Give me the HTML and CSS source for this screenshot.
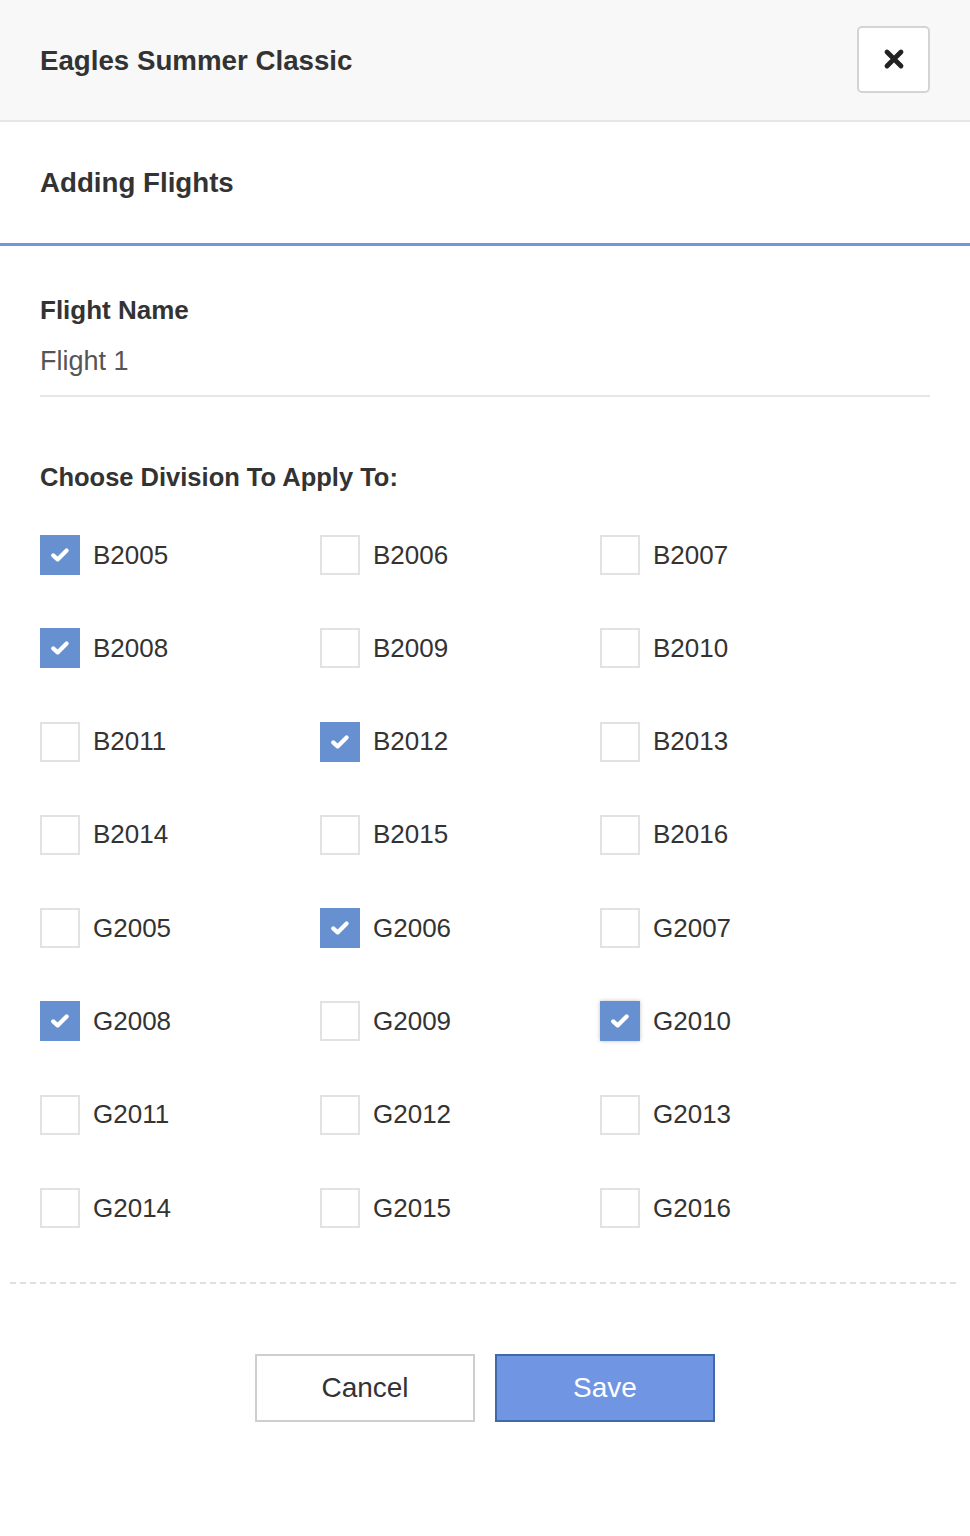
FILE: index.html
```html
<!DOCTYPE html>
<html lang="en">
  <head>
    <meta charset="UTF-8" />
    <meta name="viewport" content="width=device-width, initial-scale=1.0" />
    <title>Adding Flights</title>
    <link rel="stylesheet" href="styles.css">
  </head>
  <body>
    <div class="modal">
      <div class="modal-header">
        <h1>Eagles Summer Classic</h1>
        <button class="close-btn" type="button" aria-label="Close">
          <svg width="22" height="22" viewBox="0 0 22 22">
            <path d="M4 4 L18 18 M18 4 L4 18" stroke="#222" stroke-width="4.8" stroke-linecap="round" />
          </svg>
        </button>
      </div>

      <div class="sub-header">
        <h2>Adding Flights</h2>
      </div>

      <form class="flight-form">
        <div class="field">
          <label for="flight-name">Flight Name</label>
          <input type="text" id="flight-name" value="Flight 1" />
        </div>

        <h3>Choose Division To Apply To:</h3>
        <div class="division-grid" id="division-grid"></div>

        <div class="divider"></div>

        <div class="actions">
          <button type="button" class="btn btn-cancel">Cancel</button>
          <button type="submit" class="btn btn-save">Save</button>
        </div>
      </form>
    </div>

    <script>
      document.addEventListener("DOMContentLoaded", function () {
        const grid = document.getElementById("division-grid");
        const divisions = [
          "B2005", "B2006", "B2007", "B2008", "B2009", "B2010",
          "B2011", "B2012", "B2013", "B2014", "B2015", "B2016",
          "G2005", "G2006", "G2007", "G2008", "G2009", "G2010",
          "G2011", "G2012", "G2013", "G2014", "G2015", "G2016"
        ];
        const checked = ["B2005", "B2008", "B2012", "G2006", "G2008", "G2010"];
        const focused = "G2010";

        divisions.forEach(function (name) {
          const item = document.createElement("label");
          item.className = "division";

          const box = document.createElement("span");
          box.className = "checkbox";
          if (checked.includes(name)) box.classList.add("checked");
          if (name === focused) box.classList.add("focused");
          box.innerHTML =
            '<svg width="20" height="16" viewBox="0 0 20 16"><path d="M3.2 8.4 L7.6 12.4 L16.6 3.4" fill="none" stroke="#fff" stroke-width="4.2" stroke-linecap="round" stroke-linejoin="round"/></svg>';

          const text = document.createElement("span");
          text.textContent = name;

          item.appendChild(box);
          item.appendChild(text);
          item.addEventListener("click", function () {
            box.classList.toggle("checked");
          });
          grid.appendChild(item);
        });
      });
    </script>
  </body>
</html>
```

FILE: styles.css
```css
* {
  margin: 0;
  padding: 0;
  box-sizing: border-box;
}

body {
  font-family: "Liberation Sans", Arial, sans-serif;
  color: #333;
  background-color: #fff;
}

.modal {
  width: 970px;
}

.modal-header {
  height: 122px;
  background-color: #f8f8f8;
  border-bottom: 2px solid #e6e6e6;
  display: flex;
  align-items: center;
  justify-content: space-between;
  padding: 0 40px 2px 40px;
}

.modal-header h1 {
  font-size: 27.7px;
  font-weight: bold;
  color: #333;
  padding-top: 4px;
}

.close-btn {
  width: 73px;
  height: 67px;
  background-color: #fff;
  border: 2px solid #d4d4d4;
  border-radius: 5px;
  display: flex;
  align-items: center;
  justify-content: center;
  cursor: pointer;
}

.sub-header {
  height: 124px;
  display: flex;
  align-items: center;
  padding: 0 40px;
  border-bottom: 3px solid #7096e0;
}

.sub-header h2 {
  font-size: 27.7px;
  font-weight: bold;
}

.flight-form {
  padding-top: 48px;
}

.field {
  margin: 0 40px;
  border-bottom: 2px solid #e6e6e6;
}

.field label {
  display: block;
  font-size: 26px;
  font-weight: bold;
  line-height: 32px;
}

.field input {
  display: block;
  width: 100%;
  border: none;
  outline: none;
  font-family: inherit;
  font-size: 27px;
  color: #555;
  padding: 20px 0 18px;
  background: transparent;
}

.flight-form h3 {
  margin: 64px 40px 0;
  font-size: 25.5px;
  font-weight: bold;
  line-height: 32px;
}

.division-grid {
  margin: 42px 40px 0;
  display: grid;
  grid-template-columns: 280px 280px 280px;
  row-gap: 53.3px;
}

.division {
  display: flex;
  align-items: center;
  gap: 13px;
  font-size: 26px;
  color: #333;
  cursor: pointer;
  height: 40px;
}

.checkbox {
  width: 40px;
  height: 40px;
  border: 2px solid #e2e2e2;
  background-color: #fff;
  display: flex;
  align-items: center;
  justify-content: center;
}

.checkbox svg {
  visibility: hidden;
}

.checkbox.checked {
  background-color: #6690d0;
  border-color: #6690d0;
}

.checkbox.checked svg {
  visibility: visible;
}

.checkbox.focused {
  box-shadow: 0 0 4px rgba(0, 0, 0, 0.25);
}

.divider {
  margin: 54px 10px 0;
  height: 2px;
  background-image: repeating-linear-gradient(to right, #e0e0e0 0 6px, transparent 6px 10px);
}

.actions {
  display: flex;
  justify-content: center;
  gap: 20px;
  padding-top: 70px;
}

.btn {
  width: 220px;
  height: 68px;
  font-family: inherit;
  font-size: 28px;
  cursor: pointer;
}

.btn-cancel {
  background-color: #fff;
  border: 2px solid #cfcfcf;
  color: #333;
}

.btn-save {
  background-color: #7096e3;
  border: 2px solid #3f6aa6;
  color: #fff;
}
```
